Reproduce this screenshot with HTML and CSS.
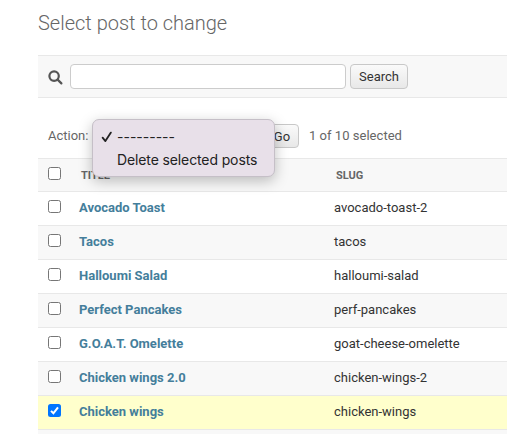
FILE: index.html
```html
<!DOCTYPE html>
<html lang="en">
<head>
<meta charset="utf-8">
<title>Select post to change</title>
<link rel="stylesheet" href="styles.css">
</head>
<body>
<main class="content">
  <h1>Select post to change</h1>
  <form class="toolbar">
    <svg class="search-icon" viewBox="0 0 15 15" aria-hidden="true"><circle cx="6.1" cy="6.1" r="4.7"/><path d="M9.6 9.6L13.4 13.4"/></svg>
    <input class="searchbar" type="text" aria-label="Search posts">
    <button class="button" type="button">Search</button>
  </form>
  <div class="actions">
    <span class="action-label">Action:</span>
    <div class="select">
      <div class="menu">
        <div class="option"><svg class="tick" viewBox="0 0 12 12" aria-hidden="true"><path d="M1.6 6.6L4.4 10.1L9.9 1.6"/></svg><span>---------</span></div>
        <div class="option"><span class="delete">Delete selected posts</span></div>
      </div>
    </div>
    <button class="button go" type="button">Go</button>
    <span class="counter">1 of 10 selected</span>
  </div>
  <div class="results">
    <div class="row head"><span class="box"></span><span class="th">Title</span><span class="th">Slug</span></div>
    <div class="row"><span class="box"></span><a>Avocado Toast</a><span>avocado-toast-2</span></div>
    <div class="row alt"><span class="box"></span><a>Tacos</a><span>tacos</span></div>
    <div class="row"><span class="box"></span><a>Halloumi Salad</a><span>halloumi-salad</span></div>
    <div class="row alt"><span class="box"></span><a>Perfect Pancakes</a><span>perf-pancakes</span></div>
    <div class="row"><span class="box"></span><a>G.O.A.T. Omelette</a><span>goat-cheese-omelette</span></div>
    <div class="row alt"><span class="box"></span><a>Chicken wings 2.0</a><span>chicken-wings-2</span></div>
    <div class="row selected"><span class="box checked"><svg viewBox="0 0 13 13" aria-hidden="true"><path d="M3 6.9L5.4 9.3L10 3.3"/></svg></span><a>Chicken wings</a><span>chicken-wings</span></div>
    <div class="next-row alt"></div>
  </div>
</main>
</body>
</html>
```

FILE: styles.css
```css
* { box-sizing: border-box; }
body {
  margin: 0;
  background: #fff;
  color: #333;
  font: 13px/17px Roboto, "Liberation Sans", sans-serif;
}
.content { padding: 11px 0 0 38px; }
h1 {
  height: 24px;
  margin: 0 0 20px;
  color: #666;
  font-size: 20px;
  font-weight: 300;
  line-height: 24px;
}
.toolbar {
  display: flex;
  align-items: center;
  height: 43px;
  padding-left: 10px;
  background: #f8f8f8;
  border: solid #e8e8e8;
  border-width: 1px 0;
}
.search-icon {
  width: 15px;
  height: 15px;
  margin: 1px 7px 0 0;
  fill: none;
  stroke: #555;
  stroke-width: 2.2;
  stroke-linecap: round;
}
.searchbar {
  width: 276px;
  height: 25px;
  margin: 0 4px 0 0;
  background: #fff;
  border: 1px solid #ccc;
  border-radius: 4px;
}
.button {
  width: 58px;
  height: 25px;
  padding: 0;
  background: linear-gradient(#fafafa, #e8e8e8);
  border: 1px solid #c8c8c8;
  border-radius: 4px;
  color: #333;
  font: 13px/17px Roboto, "Liberation Sans", sans-serif;
}
.actions {
  display: flex;
  align-items: center;
  height: 60px;
  padding: 15px 0 0 10px;
  color: #666;
}
.action-label { width: 45px; }
.select { position: relative; width: 170px; height: 24px; }
.menu {
  position: absolute;
  z-index: 1;
  top: -5px;
  left: -1px;
  width: 183px;
  height: 58px;
  padding: 5px 0 0 8px;
  background: #e8e0e9;
  border: 1px solid #c5bfc7;
  border-radius: 7px;
  box-shadow: 0 4px 14px rgba(0, 0, 0, .25);
  color: #222;
}
.option {
  display: flex;
  align-items: center;
  height: 23px;
  padding-left: 16px;
  font: 14px/23px Inter, sans-serif;
  white-space: nowrap;
}
.delete { letter-spacing: -.12px; }
.tick {
  width: 12px;
  height: 12px;
  margin: 1px 4px 0 -16px;
  fill: none;
  stroke: #222;
  stroke-width: 1.8;
  stroke-linecap: round;
  stroke-linejoin: round;
}
.go { width: 36px; height: 24px; padding: 1px 0 0 2px; }
.counter { margin-left: 10px; letter-spacing: .03px; }
.row {
  display: grid;
  grid-template-columns: 41px 255px 1fr;
  align-items: center;
  height: 34px;
  padding-bottom: 3px;
  border-bottom: 1px solid #e8e8e8;
}
.head { background: #f8f8f8; border-top: 1px solid #e8e8e8; }
.alt { background: #f8f8f8; }
.selected { background: #ffc; }
.next-row { height: 4px; }
.row a { color: #447e9b; font-weight: 700; }
.th {
  padding: 4px 0 0 2px;
  color: #666;
  font-size: 11px;
  font-weight: 700;
  text-transform: uppercase;
}
.box {
  width: 13px;
  height: 13px;
  margin: -1px 0 0 10px;
  background: #fff;
  border: 1px solid #767676;
  border-radius: 2.5px;
}
.checked { background: #0075ff; border: 0; }
.checked svg {
  display: block;
  fill: none;
  stroke: #fff;
  stroke-width: 2;
}
```
